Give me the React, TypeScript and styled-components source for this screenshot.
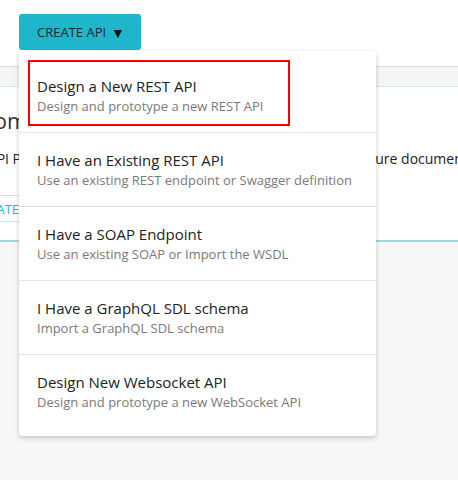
import React from "react"
import styled, { createGlobalStyle } from "styled-components"

const GlobalStyle = createGlobalStyle`
  body {
    margin: 0;
    background: #f7f7f7;
    font-family: "Open Sans", "Liberation Sans", sans-serif;
  }
`

const Page = styled.div`
  width: 458px;
  height: 480px;
  overflow: hidden;
  background: #f7f7f7;
`

const TopBar = styled.div`
  height: 66px;
  background: #ffffff;
  padding-left: 19px;
  box-sizing: border-box;
  padding-top: 14px;
`

const Dropdown = styled.div`
  position: relative;
  display: inline-block;
`

const CreateButton = styled.button`
  display: flex;
  align-items: center;
  gap: 5px;
  height: 36px;
  width: 122px;
  padding: 0 0 0 18px;
  border: none;
  border-radius: 3px;
  background: #1fb6cc;
  color: #1c2a30;
  font-family: inherit;
  font-size: 13px;
  text-transform: uppercase;
  cursor: pointer;
`

const Caret = styled.span`
  font-size: 14px;
  color: #111;
`

const Menu = styled.div`
  position: absolute;
  top: 37px;
  left: 0;
  z-index: 10;
  width: 357px;
  padding: 8px 0;
  background: #ffffff;
  border-radius: 4px;
  box-shadow: 0 2px 5px rgba(0, 0, 0, 0.22);
`

const Item = styled.div<{ $last?: boolean }>`
  position: relative;
  padding: 17px 18px 17px;
  border-bottom: ${({ $last }) => ($last ? "none" : "1px solid #e3e3e3")};
`

const ItemTitle = styled.div`
  font-size: 15px;
  line-height: 21px;
  color: #222;
`

const ItemText = styled.div`
  font-size: 13px;
  line-height: 18px;
  color: #7a7a7a;
`

const Highlight = styled.div`
  position: absolute;
  left: 9px;
  top: 1px;
  width: 262px;
  height: 66px;
  box-sizing: border-box;
  border: 2px solid #f00;
  pointer-events: none;
`

const TabBand = styled.div`
  height: 19px;
  background: #f5f5f5;
  border-top: 1px solid #dadada;
  border-bottom: 1px solid #cdebef;
`

const Card = styled.div`
  height: 153px;
  background: #ffffff;
  border-bottom: 2px solid #a6d6dc;
  overflow: hidden;
`

const CardInner = styled.div`
  margin-left: -40px;
  padding-top: 20px;
  white-space: nowrap;
`

const Heading = styled.h1`
  margin: 0 0 0 -15px;
  font-size: 22px;
  font-weight: 400;
  line-height: 26px;
  color: #333;
`

const Lead = styled.p`
  margin: 16px 0 0;
  font-size: 14px;
  line-height: 20px;
  color: #222;
`

const OutlineButton = styled.button`
  margin-top: 26px;
  height: 27px;
  padding: 0 12px;
  border: 1px solid #c9e7ec;
  border-radius: 2px;
  background: #ffffff;
  color: #1fb6cc;
  font-family: inherit;
  font-size: 13px;
  text-transform: uppercase;
`

const options = [
  { title: "Design a New REST API", text: "Design and prototype a new REST API" },
  { title: "I Have an Existing REST API", text: "Use an existing REST endpoint or Swagger definition" },
  { title: "I Have a SOAP Endpoint", text: "Use an existing SOAP or Import the WSDL" },
  { title: "I Have a GraphQL SDL schema", text: "Import a GraphQL SDL schema" },
  { title: "Design New Websocket API", text: "Design and prototype a new WebSocket API" },
]

export default function App() {
  return (
    <Page>
      <GlobalStyle />
      <TopBar>
        <Dropdown>
          <CreateButton>
            Create API <Caret>▼</Caret>
          </CreateButton>
          <Menu>
            {options.map((o, i) => (
              <Item key={o.title} $last={i === options.length - 1}>
                {i === 0 && <Highlight />}
                <ItemTitle>{o.title}</ItemTitle>
                <ItemText>{o.text}</ItemText>
              </Item>
            ))}
          </Menu>
        </Dropdown>
      </TopBar>
      <TabBand />
      <Card>
        <CardInner>
          <Heading>Welcome to API Manager</Heading>
          <Lead>The API Publisher lets you design, test, publish, manage and secure documentation</Lead>
          <OutlineButton>Create</OutlineButton>
        </CardInner>
      </Card>
    </Page>
  )
}
